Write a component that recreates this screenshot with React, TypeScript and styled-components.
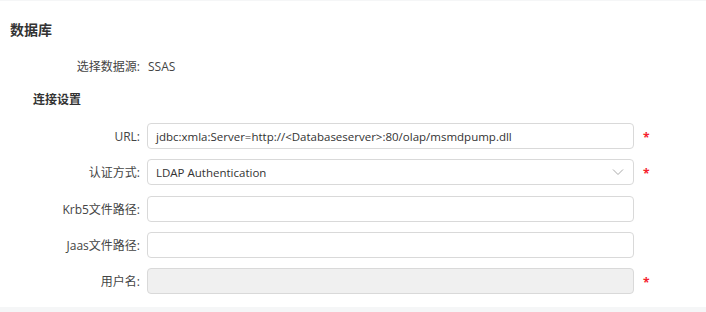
import React from "react";
import styled, { createGlobalStyle } from "styled-components";

const Global = createGlobalStyle`
  html, body { margin: 0; padding: 0; background: #f5f6f7; }
  body { font-family: "Open Sans", "Noto Sans CJK SC", sans-serif; color: #333; }
`;

const Page = styled.div`
  width: 706px;
  height: 312px;
  box-sizing: border-box;
  padding-top: 1px;
  overflow: hidden;
`;

const Card = styled.div`
  background: #fff;
  height: 306px;
  box-sizing: border-box;
  padding: 17px 0 0 10px;
`;

const Title = styled.div`
  font-size: 14px;
  font-weight: 700;
  color: #333;
  line-height: 22px;
  font-family: "Noto Sans CJK SC", sans-serif;
`;

const Form = styled.div`
  display: flex;
  flex-direction: column;
`;

const Row = styled.div<{ $top?: number }>`
  display: grid;
  grid-template-columns: 130px 487px 20px;
  column-gap: 7px;
  align-items: center;
  margin-top: ${(p) => p.$top ?? 10}px;
`;

const Label = styled.div`
  text-align: right;
  font-size: 12px;
  color: #444;
  font-family: "Open Sans", "Noto Sans CJK SC", sans-serif;
`;

const Value = styled.div`
  font-size: 12px;
  color: #444;
  padding-left: 1px;
`;

const Section = styled.div`
  font-size: 12px;
  font-weight: 700;
  color: #333;
  padding-left: 23px;
  margin-top: 15px;
  line-height: 18px;
  font-family: "Noto Sans CJK SC", sans-serif;
`;

const Field = styled.div<{ $disabled?: boolean }>`
  height: 26px;
  box-sizing: border-box;
  border: 1px solid #d9d9d9;
  border-radius: 4px;
  background: ${(p) => (p.$disabled ? "#f0f0f0" : "#fff")};
  display: flex;
  align-items: center;
  padding: 0 8px;
  font-size: 11.5px;
  color: #333;
  justify-content: space-between;
`;

const Star = styled.span`
  color: #f5222d;
  font-size: 12px;
  font-weight: 700;
  padding-left: 2px;
  padding-top: 3px;
  line-height: 1;
`;

const Chevron = () => (
  <svg width="12" height="8" viewBox="0 0 12 8" style={{ marginRight: 1 }}>
    <path d="M1 1.5 L6 6.5 L11 1.5" fill="none" stroke="#aaa" strokeWidth="1" />
  </svg>
);

export default function App() {
  return (
    <>
      <Global />
      <Page>
        <Card>
          <Title>数据库</Title>
          <Form>
            <Row $top={17}>
              <Label>选择数据源:</Label>
              <Value>SSAS</Value>
            </Row>
            <Section>连接设置</Section>
            <Row $top={15}>
              <Label>URL:</Label>
              <Field>jdbc:xmla:Server=http://&lt;Databaseserver&gt;:80/olap/msmdpump.dll</Field>
              <Star>*</Star>
            </Row>
            <Row $top={10}>
              <Label>认证方式:</Label>
              <Field>
                LDAP Authentication
                <Chevron />
              </Field>
              <Star>*</Star>
            </Row>
            <Row $top={11}>
              <Label>Krb5文件路径:</Label>
              <Field />
              <span />
            </Row>
            <Row>
              <Label>Jaas文件路径:</Label>
              <Field />
              <span />
            </Row>
            <Row>
              <Label>用户名:</Label>
              <Field $disabled />
              <Star>*</Star>
            </Row>
          </Form>
        </Card>
      </Page>
    </>
  );
}
